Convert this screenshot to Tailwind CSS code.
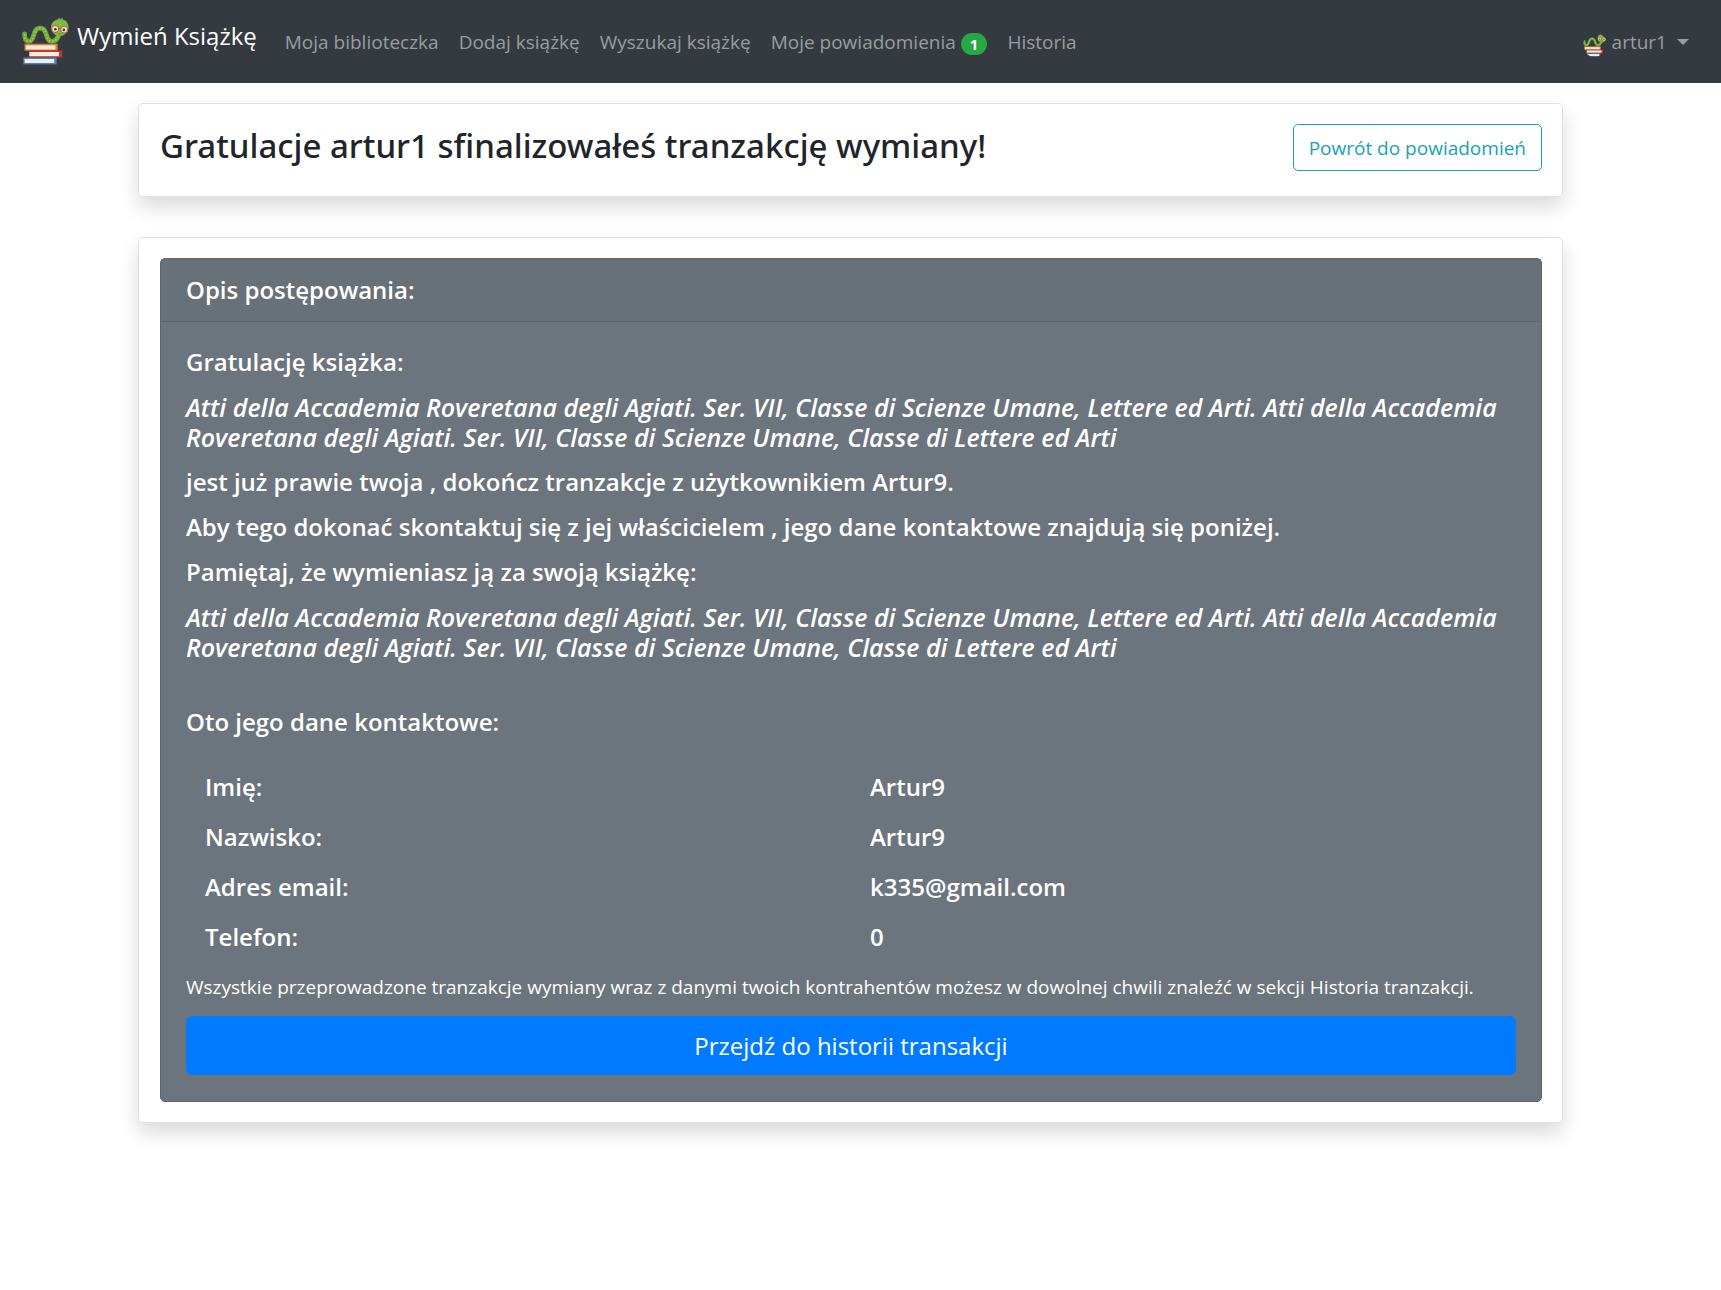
<!DOCTYPE html>
<html lang="pl">
<head>
<meta charset="utf-8">
<meta name="viewport" content="width=device-width, initial-scale=1">
<title>Wymień Książkę</title>
<script src="https://cdn.jsdelivr.net/npm/@tailwindcss/browser@4"></script>
</head>
<body class="min-h-screen bg-white font-['Open_Sans','Noto_Sans',sans-serif] text-[19px] leading-[30px] text-[#212529]">
<svg class="hidden" aria-hidden="true">
  <symbol id="bookworm" viewBox="0 0 48 48">
    <rect x="2.5" y="26.7" width="33.2" height="7" fill="#e8762c"/>
    <rect x="3.8" y="28.3" width="29.6" height="4.2" fill="#f1ede2"/>
    <rect x="7" y="33.5" width="33.2" height="7" fill="#c4322f"/>
    <rect x="7.4" y="35" width="29.6" height="4.2" fill="#f1ede2"/>
    <rect x="1.3" y="40.5" width="33.4" height="6.9" fill="#4f83b4"/>
    <rect x="2.6" y="42" width="29.6" height="4" fill="#f1ede2"/>
    <path d="M2.6 17C2.6 22 4 24.6 7.4 24.2C13.4 23.4 10 11.2 18.2 11.2C26.4 11.2 22.5 24.4 30 24.4C34.6 24.4 36 20.5 37.4 16" fill="none" stroke="#72a83a" stroke-width="4.8" stroke-linecap="round"/>
    <path d="M2.6 17C2.6 22 4 24.6 7.4 24.2C13.4 23.4 10 11.2 18.2 11.2C26.4 11.2 22.5 24.4 30 24.4C34.6 24.4 36 20.5 37.4 16" fill="none" stroke="#a5d46a" stroke-width="1.8" stroke-dasharray="1.4 2"/>
    <path d="M38 3L36.5 .8M38.2 3L40.5 1" stroke="#72a83a" stroke-width="1.2"/>
    <path d="M38 2C43.5 2 47 6 46.4 11C46 15.5 42 19 37.8 19C33 19 29 15 29 10.5C29 5.600 33 2 38 2Z" fill="#80b940"/>
    <circle cx="33.200" cy="12" r="3.500" fill="#ece6cf" stroke="#b4552c"/>
    <circle cx="42.200" cy="12.600" r="3.500" fill="#ece6cf" stroke="#b4552c"/>
    <path d="M36.700 11.600Q37.700 10.800 38.700 11.900" fill="none" stroke="#b4552c"/>
    <circle cx="33.400" cy="12.300" r="1.300" fill="#3a3328"/>
    <circle cx="41.900" cy="12.900" r="1.300" fill="#3a3328"/>
    <path d="M35.800 16.600Q37.500 17.800 39.200 16.800" fill="none" stroke="#4d7a26" stroke-width=".8"/>
  </symbol>
</svg>

<nav class="flex min-h-[83px] items-center bg-[#343a40] pr-8 pl-[22px]">
  <a href="#" class="mr-[18px] flex items-start gap-[7px] pb-[2px] text-[24px] leading-[38px] whitespace-nowrap text-white">
    <svg class="h-12 w-12" aria-hidden="true"><use href="#bookworm"/></svg>Wymień Książkę
  </a>
  <ul class="flex items-center whitespace-nowrap text-[#9a9da0]">
    <li><a href="#" class="block px-[10px]">Moja biblioteczka</a></li>
    <li><a href="#" class="block px-[10px]">Dodaj książkę</a></li>
    <li><a href="#" class="block px-[10px]">Wyszukaj książkę</a></li>
    <li><a href="#" class="flex items-center gap-[5px] px-[10px]">Moje powiadomienia <span class="mt-1 rounded-full bg-[#28a745] px-[9px] text-[15px] leading-[22px] font-bold text-white">1</span></a></li>
    <li><a href="#" class="block px-[10px]">Historia</a></li>
  </ul>
  <button type="button" class="ml-auto flex items-center text-[#9a9da0]" aria-haspopup="true">
    <svg class="mt-1.5 mr-[5px] h-6 w-6 rounded-full" aria-hidden="true"><use href="#bookworm"/></svg>
    artur1
    <svg class="ml-[10px] h-[6px] w-3" viewBox="0 0 12 6" aria-hidden="true"><path d="M0 0H12L6 6Z" fill="currentColor"/></svg>
  </button>
</nav>

<main class="pr-5">
  <div class="mx-auto flex max-w-[1425px] flex-col gap-10 py-5">
    <header class="flex items-start justify-between rounded-[5px] border border-[#dee2e6] pt-5 pr-5 pb-[25px] pl-[21px] shadow-[0_10px_20px_rgba(0,0,0,0.15)]">
      <h1 class="font-['Noto_Sans','Open_Sans',sans-serif] text-[33px] leading-[44px] font-medium">Gratulacje artur1 sfinalizowałeś tranzakcję wymiany!</h1>
      <a href="#" class="rounded-[5px] border border-[#17a2b8] px-[15px] pt-2 pb-[7px] text-[#17a2b8]">Powrót do powiadomień</a>
    </header>

    <section class="rounded-[5px] border border-[#dee2e6] py-5 pr-5 pl-[21px] shadow-[0_10px_20px_rgba(0,0,0,0.15)]">
      <div class="rounded-[5px] border border-[#5e656b] bg-[#6c757d] text-white">
        <h2 class="border-b border-[#5e656b] bg-[#697178] px-[25px] py-4 text-[24px] leading-[30px] font-semibold">Opis postępowania:</h2>
        <div class="px-[25px] pt-[25px] pb-[26px]">
          <div class="flex flex-col gap-[15px] text-[24px] leading-[30px] font-semibold">
            <p>Gratulację książka:</p>
            <p class="text-[25px] italic">Atti della Accademia Roveretana degli Agiati. Ser. VII, Classe di Scienze Umane, Lettere ed Arti. Atti della Accademia Roveretana degli Agiati. Ser. VII, Classe di Scienze Umane, Classe di Lettere ed Arti</p>
            <p>jest już prawie twoja , dokończ tranzakcje z użytkownikiem Artur9.</p>
            <p>Aby tego dokonać skontaktuj się z jej właścicielem , jego dane kontaktowe znajdują się poniżej.</p>
            <p>Pamiętaj, że wymieniasz ją za swoją książkę:</p>
            <p class="text-[25px] italic">Atti della Accademia Roveretana degli Agiati. Ser. VII, Classe di Scienze Umane, Lettere ed Arti. Atti della Accademia Roveretana degli Agiati. Ser. VII, Classe di Scienze Umane, Classe di Lettere ed Arti</p>
            <h3 class="mt-[30px]">Oto jego dane kontaktowe:</h3>
          </div>
          <table class="mt-[25px] mb-[10px] w-full table-fixed text-left text-[24px] leading-[30px] font-semibold">
            <tbody>
              <tr><th scope="row" class="px-[19px] py-[10px] font-semibold">Imię:</th><td class="px-[19px] py-[10px]">Artur9</td></tr>
              <tr><th scope="row" class="px-[19px] py-[10px] font-semibold">Nazwisko:</th><td class="px-[19px] py-[10px]">Artur9</td></tr>
              <tr><th scope="row" class="px-[19px] py-[10px] font-semibold">Adres email:</th><td class="px-[19px] py-[10px]">k335@gmail.com</td></tr>
              <tr><th scope="row" class="px-[19px] py-[10px] font-semibold">Telefon:</th><td class="px-[19px] py-[10px]">0</td></tr>
            </tbody>
          </table>
          <p>Wszystkie przeprowadzone tranzakcje wymiany wraz z danymi twoich kontrahentów możesz w dowolnej chwili znaleźć w sekcji Historia tranzakcji.</p>
          <a href="#" class="mt-[14px] block rounded-[6px] bg-[#007bff] px-5 py-[11px] text-center text-[24px] leading-[37px]">Przejdź do historii transakcji</a>
        </div>
      </div>
    </section>
  </div>
</main>
</body>
</html>
